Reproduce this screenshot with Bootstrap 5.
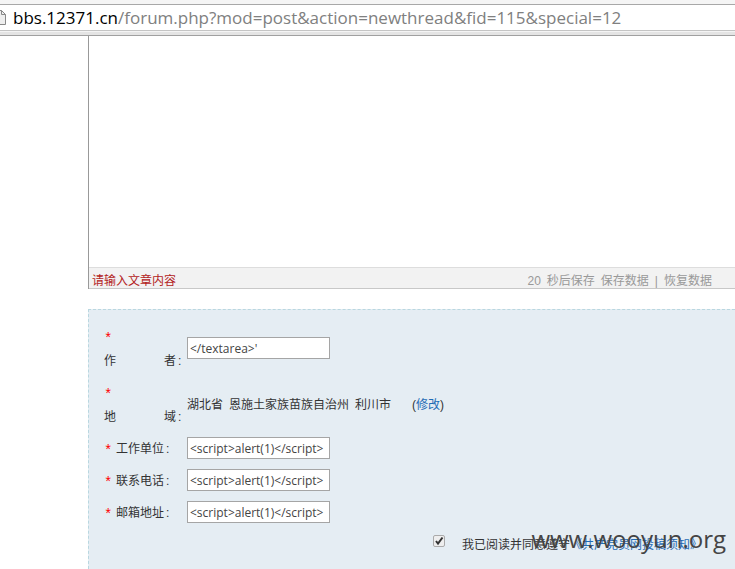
<!DOCTYPE html>
<html lang="zh-CN">
<head>
<meta charset="utf-8">
<meta name="viewport" content="width=device-width, initial-scale=1">
<title>bbs.12371.cn</title>
<link href="https://cdn.jsdelivr.net/npm/bootstrap@5.3.0/dist/css/bootstrap.min.css" rel="stylesheet">
<style>
body { font: 12px/24px "Liberation Sans", "Noto Sans CJK SC", sans-serif; color: #333; background: #fff; }
.browser-bar { background: #f5f5f5; padding-top: 4px; }
.address-row { height: 27px; border-top: 1px solid #a8a8a8; border-bottom: 1px solid #c4c4c4; background: #fff; gap: 6px; }
.address-row .host { color: #000; }
.address-row a { font: 17px/24px "Open Sans", sans-serif; color: #808080; }
.page-icon { width: 7px; height: 17px; }
.bar-edge { height: 5px; background: #e4e4e4; border-top: 1px solid #f4f4f4; border-bottom: 1px solid #a0a0a0; }
.thread-page { padding-left: 88px; }
.editor { border-left: 1px solid #999; }
.editor textarea { height: 231px; resize: none; outline: 0; }
.editor-status { height: 22px; line-height: 26px; background: #f2f2f2; border-top: 1px solid #ddd; border-bottom: 1px solid #c8c8c8; padding: 0 23px 0 3px; color: #999; }
.editor-status a { color: #999; }
.hint { color: #b22222; }
.author-panel { margin-top: 20px; padding: 14px 0 12px 15px; background: #e5edf3; border-top: 1px dashed #b9d7e0; border-left: 1px dashed #b9d7e0; gap: 7px; }
.field-label { width: 83px; padding-top: 1px; }
.spread { width: 72px; }
.req { width: 12px; height: 24px; color: #f00; font: 14px/28px "Liberation Mono", monospace; }
.field-input { width: 143px; height: 22px; margin-bottom: 1px; padding: 0 2px; border: 1px solid #a5a5a5; background: #fff; color: #444; font: 12px/18px "Open Sans", sans-serif; }
.place { gap: 6px; }
.author-panel .place { padding-top: 1px; }
.change { margin-left: 15px; }
.author-panel a { color: #1f6bb5; }
.colon { margin-left: 2px; }
.agree { padding: 1px 33px 0 0; gap: 17px; }
.agree input { appearance: none; width: 12px; height: 12px; margin: 0; border: 1px solid #aaa; border-radius: 2px; background: #eee; }
.tick { display: grid; padding-top: 2px; }
.tick input, .tick svg { grid-area: 1 / 1; }
.tick svg { width: 12px; height: 12px; pointer-events: none; }
.site-stamp { right: 9px; bottom: 12px; font: 24px/36px "Open Sans", sans-serif; color: #444; pointer-events: none; }
</style>
<script src="https://cdn.jsdelivr.net/npm/bootstrap@5.3.0/dist/js/bootstrap.bundle.min.js"></script>
</head>
<body>
<div class="d-flex flex-column min-vh-100 position-relative overflow-hidden">
  <header class="browser-bar">
    <div class="address-row d-flex align-items-center text-nowrap overflow-hidden">
      <svg class="page-icon flex-shrink-0" viewBox="0 0 7 17" fill="none" stroke="#888" aria-hidden="true"><path fill="#eee" d="M-6 1.5H1.5L5.500 5.500V15.500H-6"/><path d="M1.500 1.500V5.500H5.500"/></svg>
      <a class="text-decoration-none" href="#"><span class="host">bbs.12371.cn</span>/forum.php?mod=post&amp;action=newthread&amp;fid=115&amp;special=12</a>
    </div>
    <div class="bar-edge"></div>
  </header>
  <main class="thread-page d-flex flex-column flex-grow-1">
    <section class="editor">
      <textarea class="d-block w-100 border-0" aria-label="文章内容"></textarea>
      <div class="editor-status d-flex justify-content-between text-nowrap">
        <span class="hint">请输入文章内容</span>
        <div class="place d-flex"><span>20</span><span>秒后保存</span><a class="text-decoration-none" href="#">保存数据</a><span>|</span><a class="text-decoration-none" href="#">恢复数据</a></div>
      </div>
    </section>
    <form class="author-panel d-flex flex-column flex-grow-1 text-nowrap">
      <div class="d-flex align-items-center">
        <label class="field-label" for="author"><span class="req d-block">*</span><span class="d-flex"><span class="spread d-flex justify-content-between"><span>作</span><span>者</span></span><span class="colon">:</span></span></label>
        <input class="field-input" id="author" type="text" value="&lt;/textarea&gt;'">
      </div>
      <div class="d-flex align-items-center">
        <div class="field-label"><span class="req d-block">*</span><span class="d-flex"><span class="spread d-flex justify-content-between"><span>地</span><span>域</span></span><span class="colon">:</span></span></div>
        <div class="place d-flex"><span>湖北省</span><span>恩施土家族苗族自治州</span><span>利川市</span><span class="change">(<a class="text-decoration-none" href="#">修改</a>)</span></div>
      </div>
      <div class="d-flex align-items-center">
        <label class="field-label d-flex" for="company"><span class="req">*</span>工作单位<span class="colon">:</span></label>
        <input class="field-input" id="company" type="text" value="&lt;script&gt;alert(1)&lt;/script&gt;">
      </div>
      <div class="d-flex align-items-center">
        <label class="field-label d-flex" for="phone"><span class="req">*</span>联系电话<span class="colon">:</span></label>
        <input class="field-input" id="phone" type="text" value="&lt;script&gt;alert(1)&lt;/script&gt;">
      </div>
      <div class="d-flex align-items-center">
        <label class="field-label d-flex" for="email"><span class="req">*</span>邮箱地址<span class="colon">:</span></label>
        <input class="field-input" id="email" type="text" value="&lt;script&gt;alert(1)&lt;/script&gt;">
      </div>
      <div class="agree d-flex justify-content-end">
        <span class="tick align-self-start"><input id="agree" type="checkbox" checked><svg viewBox="0 0 12 12" fill="none" stroke="#333" stroke-width="2" aria-hidden="true"><path d="M3 6L5 8.500L9.500 2.500"/></svg></span>
        <span><label for="agree">我已阅读并同意遵守</label><a class="text-decoration-none" href="#">《共产党员网投稿须知》</a></span>
      </div>
    </form>
  </main>
  <div class="site-stamp position-absolute">www.wooyun.org</div>
</div>
</body>
</html>
